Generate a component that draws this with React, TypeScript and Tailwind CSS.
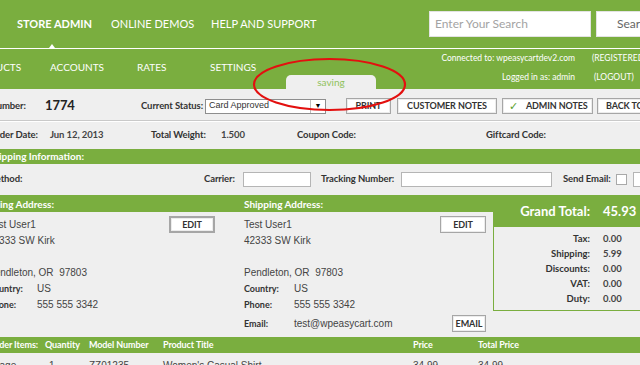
import type { FC, ReactNode } from 'react';

// Small bordered admin button (PRINT, EDIT, ...)
const Btn: FC<{ className?: string; children: ReactNode }> = ({ className = '', children }) => (
  <div
    className={`flex h-[16px] shrink-0 items-center justify-center border border-[#a6a6a6] bg-white text-[9px] font-bold tracking-[-0.1px] text-[#333] shadow-[inset_0_0_0_1px_#ececec] ${className}`}
  >
    {children}
  </div>
);

const Input: FC<{ className?: string }> = ({ className = '' }) => (
  <div className={`h-[15px] shrink-0 border border-[#b5b5b5] bg-white ${className}`} />
);

const App: FC = () => {
  return (
    <div className="relative h-[365px] w-[640px] overflow-hidden whitespace-nowrap bg-[#efefef] font-['Lato',sans-serif] text-[#333]">
      {/* Top bar */}
      <div className="flex h-[48px] items-center bg-[#7aae3f] text-white">
        <div className="flex w-[429px] shrink-0 items-center pl-[17px] text-[11px] leading-[14px]">
          <div className="relative w-[94px] shrink-0 font-bold">
            STORE ADMIN
            <span className="absolute left-[32px] top-[27px] border-x-[3px] border-b-[4px] border-x-transparent border-b-white" />
          </div>
          <div className="w-[100px] shrink-0">ONLINE DEMOS</div>
          <div className="shrink-0">HELP AND SUPPORT</div>
        </div>
        <div className="flex h-[26px] w-[162px] shrink-0 items-center border border-[#e3e3e3] bg-white pl-[5px] text-[12px] text-[#a3a3a3]">
          Enter Your Search
        </div>
        <div className="ml-[5px] flex h-[26px] w-[70px] shrink-0 items-center border border-[#e3e3e3] bg-white pl-[20px] text-[12px] text-[#666]">
          Search
        </div>
      </div>
      <div className="h-px bg-white" />

      {/* Sub navigation */}
      <div className="flex h-[40px] bg-[#7aae3f] text-[10px] text-white">
        <div className="-ml-[32px] flex w-[82px] shrink-0 items-center pb-[4px]">PRODUCTS</div>
        <div className="flex w-[87px] shrink-0 items-center pb-[4px]">ACCOUNTS</div>
        <div className="flex w-[73px] shrink-0 items-center pb-[4px]">RATES</div>
        <div className="flex w-[76px] shrink-0 items-center pb-[4px]">SETTINGS</div>
        <div className="flex h-[14px] w-[90px] shrink-0 items-center justify-center self-end rounded-t-[5px] bg-[#efefef] text-[10px] text-[#8fc25c]">
          saving
        </div>
        <div className="w-[199px] shrink-0 text-right text-[8.5px] leading-[19px]">
          <div>Connected to: wpeasycartdev2.com</div>
          <div>Logged in as: admin</div>
        </div>
        <div className="ml-[17px] shrink-0 text-[8.5px] leading-[19px]">
          <div>(REGISTERED USER)</div>
          <div className="pl-[2px]">(LOGOUT)</div>
        </div>
      </div>

      {/* Order header */}
      <div className="flex h-[32px] items-center border-b border-[#c9c9c9] pt-[3px] text-[9.5px] font-bold tracking-[-0.1px]">
        <div className="-ml-[37px] w-[82px] shrink-0">Order Number:</div>
        <div className="w-[96px] shrink-0 text-[13px] text-[#222]">1774</div>
        <div className="w-[64px] shrink-0">Current Status:</div>
        <div className="flex h-[15px] w-[121px] shrink-0 items-center border border-[#8e8e8e] bg-white font-['Liberation_Sans',sans-serif] text-[9px] font-normal tracking-normal text-[#333]">
          <span className="flex-1 pl-[3px]">Card Approved</span>
          <span className="flex h-full w-[15px] items-center justify-center border-l border-[#bdbdbd] text-[7px] text-black">▼</span>
        </div>
        <Btn className="ml-[20px] w-[45px]">PRINT</Btn>
        <Btn className="ml-[6px] w-[100px]">CUSTOMER NOTES</Btn>
        <Btn className="ml-[5px] w-[91px] justify-start pl-[6px]">
          <span className="text-[11px] font-normal text-[#5aa02c]">✓</span>
          <span className="ml-[8px]">ADMIN NOTES</span>
        </Btn>
        <Btn className="ml-[4px] w-[100px] justify-start pl-[8px]">BACK TO ORDERS</Btn>
      </div>

      <div className="flex h-[28px] items-center text-[9.5px] font-bold tracking-[-0.1px] shadow-[inset_0_1px_0_#fff]">
        <div className="-ml-[11px] w-[61px] shrink-0">Order Date:</div>
        <div className="w-[101px] shrink-0 text-[#444]">Jun 12, 2013</div>
        <div className="w-[70px] shrink-0">Total Weight:</div>
        <div className="w-[76px] shrink-0 text-[#444]">1.500</div>
        <div className="w-[189px] shrink-0">Coupon Code:</div>
        <div className="shrink-0">Giftcard Code:</div>
      </div>

      {/* Shipping information */}
      <div className="flex h-[15px] items-center bg-[#7aae3f] text-[10px] font-bold text-white">
        <div className="-ml-[12px]">Shipping Information:</div>
      </div>
      <div className="flex h-[33px] items-center border-b-2 border-[#7aae3f] text-[9.5px] font-bold tracking-[-0.1px]">
        <div className="-ml-[13px] w-[217px] shrink-0">Method:</div>
        <div className="w-[39px] shrink-0">Carrier:</div>
        <Input className="w-[68px]" />
        <div className="ml-[10px] w-[80px] shrink-0">Tracking Number:</div>
        <Input className="w-[151px]" />
        <div className="ml-[11px] w-[53px] shrink-0">Send Email:</div>
        <div className="h-[11px] w-[11px] shrink-0 border border-[#a9a9a9] bg-white" />
        <Input className="ml-[6px] w-[60px]" />
      </div>

      {/* Addresses + totals */}
      <div className="flex items-start">
        <div className="w-[493px] shrink-0">
          <div className="flex h-[15px] items-center bg-[#7aae3f] text-[10px] font-bold text-white">
            <div className="-ml-[14px] w-[258px] shrink-0">Billing Address:</div>
            <div>Shipping Address:</div>
          </div>
          <div className="flex pt-[4px] font-['Liberation_Sans',sans-serif] text-[10px] leading-[16px] text-[#444]">
            {/* Billing */}
            <div className="-ml-[12px] w-[256px] shrink-0">
              <div className="flex h-[17px] items-center">
                <span className="w-[181px] shrink-0">Test User1</span>
                <Btn className="h-[17px] w-[46px] border-2 border-[#7aae3f] font-['Lato',sans-serif]">EDIT</Btn>
              </div>
              <div>42333 SW Kirk</div>
              <div className="h-[16px]" />
              <div>Pendleton, OR&nbsp; 97803</div>
              <div className="flex">
                <span className="w-[49px] font-['Lato',sans-serif] text-[9px] font-bold text-[#333]">Country:</span>
                <span>US</span>
              </div>
              <div className="flex">
                <span className="w-[49px] font-['Lato',sans-serif] text-[9px] font-bold text-[#333]">Phone:</span>
                <span>555 555 3342</span>
              </div>
            </div>
            {/* Shipping */}
            <div className="w-[249px] shrink-0">
              <div className="flex h-[17px] items-center">
                <span className="w-[196px] shrink-0">Test User1</span>
                <Btn className="h-[17px] w-[46px] font-['Lato',sans-serif]">EDIT</Btn>
              </div>
              <div>42333 SW Kirk</div>
              <div className="h-[16px]" />
              <div>Pendleton, OR&nbsp; 97803</div>
              <div className="flex">
                <span className="w-[50px] font-['Lato',sans-serif] text-[9px] font-bold text-[#333]">Country:</span>
                <span>US</span>
              </div>
              <div className="flex">
                <span className="w-[50px] font-['Lato',sans-serif] text-[9px] font-bold text-[#333]">Phone:</span>
                <span>555 555 3342</span>
              </div>
              <div className="mt-[2px] flex h-[17px] items-center">
                <span className="w-[50px] font-['Lato',sans-serif] text-[9px] font-bold text-[#333]">Email:</span>
                <span className="w-[158px] shrink-0">test@wpeasycart.com</span>
                <Btn className="h-[17px] w-[34px] font-['Lato',sans-serif]">EMAIL</Btn>
              </div>
            </div>
          </div>
        </div>

        {/* Grand total */}
        <div className="w-[160px] shrink-0">
          <div className="flex h-[30px] items-center bg-[#7aae3f] text-[13px] font-bold text-white">
            <div className="w-[97px] shrink-0 text-right">Grand Total:</div>
            <div className="ml-[13px]">45.93</div>
          </div>
          <div className="border-b border-l border-[#7aae3f] pb-[4px] pt-[4px] text-[9.5px] font-bold leading-[15px]">
            {[
              ['Tax:', '0.00'],
              ['Shipping:', '5.99'],
              ['Discounts:', '0.00'],
              ['VAT:', '0.00'],
              ['Duty:', '0.00'],
            ].map(([label, value]) => (
              <div key={label} className="flex">
                <div className="w-[96px] shrink-0 text-right">{label}</div>
                <div className="ml-[13px] text-[#444]">{value}</div>
              </div>
            ))}
          </div>
        </div>
      </div>

      {/* Order items */}
      <div className="mt-[5px] flex h-[16px] items-center bg-[#7aae3f] text-[9px] font-bold tracking-[-0.1px] text-white">
        <div className="-ml-[11px] w-[56px] shrink-0">Order Items:</div>
        <div className="w-[44px] shrink-0">Quantity</div>
        <div className="w-[74px] shrink-0">Model Number</div>
        <div className="w-[250px] shrink-0">Product Title</div>
        <div className="w-[65px] shrink-0">Price</div>
        <div className="shrink-0">Total Price</div>
      </div>
      <div className="flex pt-[5px] font-['Liberation_Sans',sans-serif] text-[10px] leading-[16px] text-[#444]">
        <div className="-ml-[11px] w-[56px] shrink-0">image</div>
        <div className="w-[44px] shrink-0 pl-[4px]">1</div>
        <div className="w-[74px] shrink-0">ZZ01235</div>
        <div className="w-[250px] shrink-0">Women's Casual Shirt</div>
        <div className="w-[65px] shrink-0">34.99</div>
        <div className="shrink-0">34.99</div>
      </div>

      {/* Red annotation ellipse */}
      <svg className="absolute left-[252px] top-[57px] h-[55px] w-[155px]" viewBox="0 0 155 55" fill="none">
        <ellipse cx="77.5" cy="27.5" rx="75.5" ry="25.5" stroke="#e3100f" strokeWidth="2.2" />
      </svg>
    </div>
  );
};

export default App;
